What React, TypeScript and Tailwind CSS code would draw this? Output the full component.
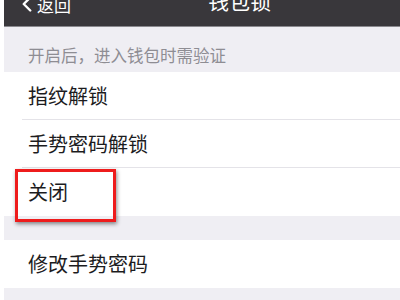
import { ChevronLeft } from "lucide-react";

const font = { fontFamily: '"Noto Sans CJK SC", "Noto Sans", sans-serif' };

function Row({ label, divider }: { label: string; divider?: boolean }) {
  return (
    <div className="relative flex h-[48px] items-center bg-white pl-[24px]">
      <span className="text-[20px] leading-none text-[#1c1c1e]">{label}</span>
      {divider && (
        <div className="absolute bottom-0 left-[18px] right-0 h-px bg-[#e4e3e8]" />
      )}
    </div>
  );
}

export default function App() {
  return (
    <main
      className="relative h-[300px] w-[400px] overflow-hidden bg-white pl-[4px]"
      style={font}
    >
      <div className="flex h-full flex-col bg-[#efeef3]">
        {/* Nav bar, top half cropped off */}
        <header className="relative h-[27px] shrink-0 overflow-hidden border-b border-[#8a898e] bg-[#39373b]">
          <div className="absolute left-[10px] top-[-9px] flex items-center text-white">
            <ChevronLeft size={26} strokeWidth={2.2} className="-mr-[3px]" />
            <span className="text-[17px] leading-none">返回</span>
          </div>
          <div className="absolute left-[204px] top-[-10px] text-[21px] leading-none text-white">
            钱包锁
          </div>
        </header>

        <div className="flex h-[45px] shrink-0 items-end pb-[9px] pl-[24px]">
          <span className="text-[16.5px] leading-none text-[#8e8d93]">
            开启后，进入钱包时需验证
          </span>
        </div>

        <Row label="指纹解锁" divider />
        <Row label="手势密码解锁" divider />
        <Row label="关闭" />

        <div className="h-[24px] shrink-0" />

        <Row label="修改手势密码" />
      </div>

      {/* Red highlight box */}
      <div className="absolute left-[15px] top-[169px] h-[53px] w-[101px] border-[3px] border-[#ee1c1c] shadow-[1px_2px_4px_rgba(0,0,0,0.45)]" />
    </main>
  );
}
